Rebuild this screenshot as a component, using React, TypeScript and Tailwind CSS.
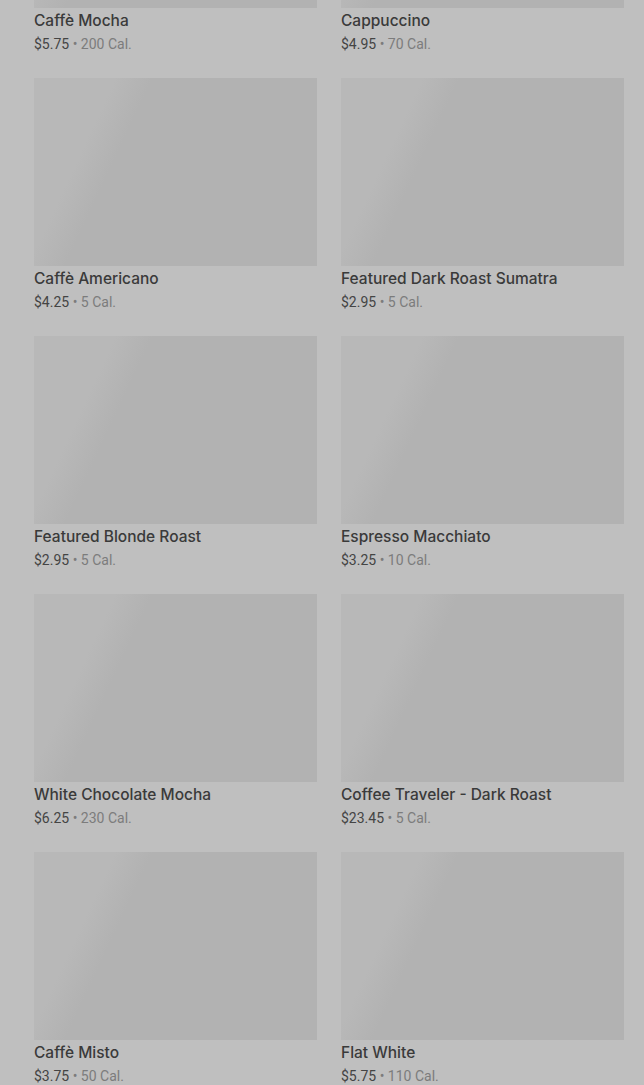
import React from "react";

interface Product {
  name: string;
  price: string;
  calories: string;
}

const products: Product[] = [
  { name: "Caffè Mocha", price: "$5.75", calories: "200 Cal." },
  { name: "Cappuccino", price: "$4.95", calories: "70 Cal." },
  { name: "Caffè Americano", price: "$4.25", calories: "5 Cal." },
  { name: "Featured Dark Roast Sumatra", price: "$2.95", calories: "5 Cal." },
  { name: "Featured Blonde Roast", price: "$2.95", calories: "5 Cal." },
  { name: "Espresso Macchiato", price: "$3.25", calories: "10 Cal." },
  { name: "White Chocolate Mocha", price: "$6.25", calories: "230 Cal." },
  { name: "Coffee Traveler - Dark Roast", price: "$23.45", calories: "5 Cal." },
  { name: "Caffè Misto", price: "$3.75", calories: "50 Cal." },
  { name: "Flat White", price: "$5.75", calories: "110 Cal." },
];

const ProductCard: React.FC<{ product: Product }> = ({ product }) => (
  <div className="flex flex-col">
    {/* loading placeholder for the product image */}
    <div className="h-[188px] w-full bg-[linear-gradient(115deg,#b8b8b8_0%,#b8b8b8_22%,#b2b2b2_32%,#b2b2b2_100%)]" />
    <div className="font-['Inter',sans-serif] text-[15.5px] leading-[26px] font-medium text-[#3a3a3a]">
      {product.name}
    </div>
    <div className="text-[14px] leading-5 text-[#444444]">
      {product.price}
      <span className="text-[#7c7c7c]"> • {product.calories}</span>
    </div>
  </div>
);

export default function App() {
  return (
    <div
      className="h-[1085px] w-full overflow-hidden bg-[#bfbfbf]"
      style={{ fontFamily: "Roboto, 'Noto Sans', sans-serif" }}
    >
      <div className="-mt-[180px] grid grid-cols-2 gap-x-6 gap-y-6 pl-[34px] pr-[20px]">
        {products.map((product) => (
          <ProductCard key={product.name} product={product} />
        ))}
      </div>
    </div>
  );
}
